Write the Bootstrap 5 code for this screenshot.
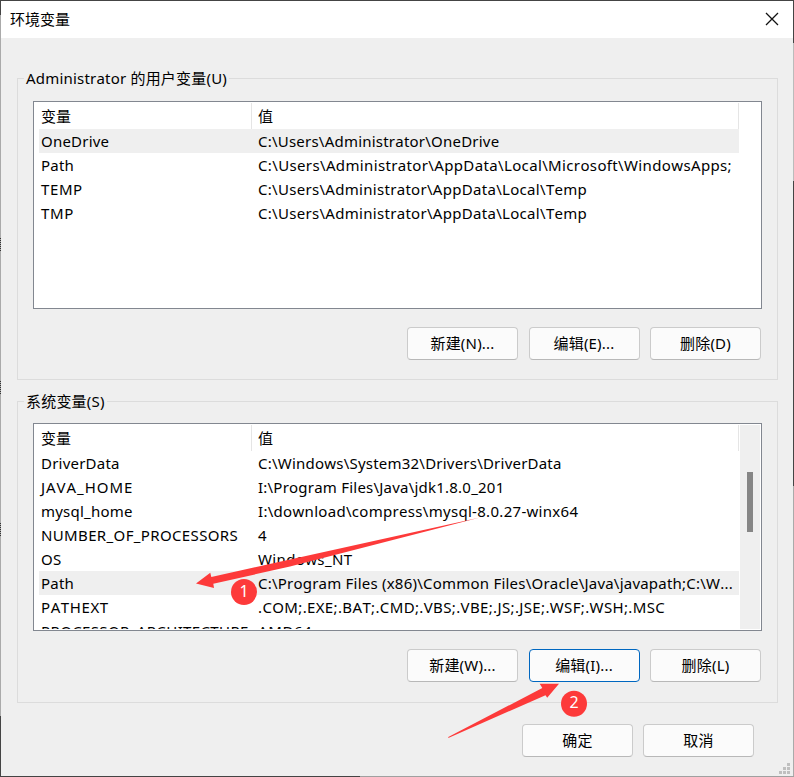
<!DOCTYPE html>
<html lang="zh-CN">
<head>
<meta charset="utf-8">
<title>环境变量</title>
<link href="https://cdn.jsdelivr.net/npm/bootstrap@5.3.0/dist/css/bootstrap.min.css" rel="stylesheet">
<style>
body{width:794px;height:777px;overflow:hidden;font:15px/24px "Noto Sans","Noto Sans CJK SC",sans-serif;color:#000;font-kerning:none;
 background:
 linear-gradient(#444,#444) 0 0/100% 1px no-repeat,
 linear-gradient(90deg,#444 360px,#a0a0a0 360px) 0 100%/100% 1px no-repeat,
 linear-gradient(#444 15px,#aaa 15px 716px,#444 716px) 0 0/1px 100% no-repeat,
 linear-gradient(#444 43px,#bbb 43px 181px,#444 181px 486px,#aaa 486px) 100% 0/1px 100% no-repeat;}
.dialog-win{width:792px;height:775px;margin:1px;background:#efefef}
.title-strip{height:37px;padding:0 14px 2px 9px}
.group-box{margin:0 15px 0 16px;height:302px;border:1px solid #dcdcdc;padding:0 15px}
.group-user{margin-top:40px}
.group-system{margin-top:21px}
.group-title{font-size:15px;line-height:22px;margin:-12px 0 12px -9px;padding:0 2px;background:#efefef;height:22px;align-self:flex-start;letter-spacing:.2px}
.group-system .group-title{margin-bottom:11px}
.list-frame{height:208px;border:1px solid #828790;background:#fff;padding:1px}
.list-rows{width:704px;padding-left:4px;overflow:hidden;flex:none}
.head-row{height:26px;line-height:26px;flex:none}
.head-row>span{border-right:1px solid #e5e5e5}
.var-row{height:24px;flex:none;white-space:nowrap;letter-spacing:.22px}
.var-row.picked{background:#efefef}
.name-cell{width:213px;padding-left:2px;flex:none}
.value-cell{padding-left:6px;flex:1}
.ls-3{letter-spacing:.3px}
.ls-4{letter-spacing:.36px}
.ls-6{letter-spacing:.6px}
.ls-9{letter-spacing:.95px}
.scroll-track{width:20px;background:#efefef;padding:47px 7px 0;margin-left:1px}
.scroll-thumb{width:6px;height:60px;background:#868686}
.btn-win{--bs-btn-font-size:15px;--bs-btn-padding-x:0;--bs-btn-padding-y:0;--bs-btn-border-radius:4px;--bs-btn-bg:#fbfbfb;--bs-btn-border-color:#cbcbcb;--bs-btn-color:#000;width:111px;height:33px;line-height:31px;border-bottom-color:#b8b8b8;letter-spacing:.2px}
.btn-win.focused{border-color:#0067c0}
.btn-row{gap:10.5px;padding:18px 1px 0 0}
.annot{position:absolute;left:0;top:0;pointer-events:none}
</style>
</head>
<body>
<main class="dialog-win d-flex flex-column">
 <header class="title-strip bg-white d-flex align-items-center justify-content-between">
  <span>环境变量</span>
  <svg width="14" height="14" viewBox="0 0 14 14" stroke="#111" stroke-width="1.3"><path d="M1 1 13 13M13 1 1 13"/></svg>
 </header>
 <section class="group-box group-user d-flex flex-column">
  <div class="group-title">Administrator 的用户变量(U)</div>
  <div class="list-frame d-flex">
   <div class="list-rows d-flex flex-column">
    <div class="head-row d-flex"><span class="name-cell">变量</span><span class="value-cell">值</span></div>
    <div class="var-row picked d-flex"><span class="name-cell">OneDrive</span><span class="value-cell">C:\Users\Administrator\OneDrive</span></div>
    <div class="var-row d-flex"><span class="name-cell">Path</span><span class="value-cell ls-4">C:\Users\Administrator\AppData\Local\Microsoft\WindowsApps;</span></div>
    <div class="var-row d-flex"><span class="name-cell ls-6">TEMP</span><span class="value-cell ls-3">C:\Users\Administrator\AppData\Local\Temp</span></div>
    <div class="var-row d-flex"><span class="name-cell ls-6">TMP</span><span class="value-cell ls-3">C:\Users\Administrator\AppData\Local\Temp</span></div>
   </div>
  </div>
  <div class="btn-row d-flex justify-content-end">
   <button class="btn btn-win">新建(N)...</button><button class="btn btn-win">编辑(E)...</button><button class="btn btn-win">删除(D)</button>
  </div>
 </section>
 <section class="group-box group-system d-flex flex-column">
  <div class="group-title">系统变量(S)</div>
  <div class="list-frame d-flex">
   <div class="list-rows d-flex flex-column">
    <div class="head-row d-flex"><span class="name-cell">变量</span><span class="value-cell">值</span></div>
    <div class="var-row d-flex"><span class="name-cell">DriverData</span><span class="value-cell">C:\Windows\System32\Drivers\DriverData</span></div>
    <div class="var-row d-flex"><span class="name-cell ls-9">JAVA_HOME</span><span class="value-cell">I:\Program Files\Java\jdk1.8.0_201</span></div>
    <div class="var-row d-flex"><span class="name-cell">mysql_home</span><span class="value-cell ls-3">I:\download\compress\mysql-8.0.27-winx64</span></div>
    <div class="var-row d-flex"><span class="name-cell ls-4">NUMBER_OF_PROCESSORS</span><span class="value-cell">4</span></div>
    <div class="var-row d-flex"><span class="name-cell">OS</span><span class="value-cell ls-4">Windows_NT</span></div>
    <div class="var-row picked d-flex"><span class="name-cell">Path</span><span class="value-cell">C:\Program Files (x86)\Common Files\Oracle\Java\javapath;C:\W...</span></div>
    <div class="var-row d-flex"><span class="name-cell ls-6">PATHEXT</span><span class="value-cell ls-4">.COM;.EXE;.BAT;.CMD;.VBS;.VBE;.JS;.JSE;.WSF;.WSH;.MSC</span></div>
    <div class="var-row d-flex"><span class="name-cell ls-4">PROCESSOR_ARCHITECTURE</span><span class="value-cell ls-6">AMD64</span></div>
   </div>
   <div class="scroll-track"><div class="scroll-thumb"></div></div>
  </div>
  <div class="btn-row d-flex justify-content-end">
   <button class="btn btn-win">新建(W)...</button><button class="btn btn-win focused">编辑(I)...</button><button class="btn btn-win">删除(L)</button>
  </div>
 </section>
 <footer class="d-flex justify-content-end" style="gap:10px;padding:21px 39px 0 0">
  <button class="btn btn-win">确定</button><button class="btn btn-win">取消</button>
 </footer>
</main>
<svg class="annot" width="794" height="777" viewBox="0 0 794 777">
 <path fill="#bfbfbf" d="M787 763h3v3h-3zM783 767h3v3h-3zM787 767h3v3h-3zM779 771h3v3h-3zM783 771h3v3h-3zM787 771h3v3h-3z"/>
 <path stroke="#333" stroke-dasharray="1 1" d="M.5 238v14M.5 381v13M.5 523v14"/>
 <g fill="#fd3a3a">
  <path d="M196 583.5 210.3 572.7 211.3 577 290 559.5 480 517.5 290 566.5 213.3 583.8 214 588z"/>
  <path d="M559 683.8H539.7L542.3 688 448.3 737 448.3 738 545.5 695.2 547.2 697.8z"/>
  <circle cx="244" cy="592" r="13"/><circle cx="574" cy="703.7" r="13"/>
 </g>
 <g fill="#fff" font-size="16" text-anchor="middle"><text x="244" y="597">1</text><text x="574" y="708">2</text></g>
</svg>
<script src="https://cdn.jsdelivr.net/npm/bootstrap@5.3.0/dist/js/bootstrap.bundle.min.js"></script>
</body>
</html>
